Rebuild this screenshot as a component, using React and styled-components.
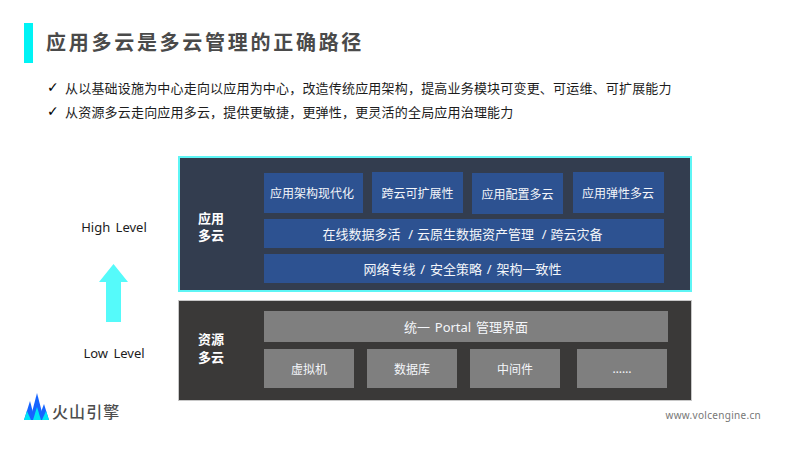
import React from 'react';
import styled, { createGlobalStyle } from 'styled-components';

const GlobalStyle = createGlobalStyle`
  html, body {
    margin: 0;
    padding: 0;
    background: #fff;
  }
  * {
    box-sizing: border-box;
  }
`;

const Slide = styled.div`
  width: 800px;
  height: 450px;
  overflow: hidden;
  background: #fff;
  padding-top: 23px;
  font-family: 'Noto Sans', 'Noto Sans CJK SC', sans-serif;
`;

const Header = styled.header`
  display: flex;
  align-items: center;
  height: 40px;
  margin-left: 24px;
`;

const AccentBar = styled.div`
  width: 9px;
  height: 40px;
  background: #00f3f5;
`;

const Title = styled.h1`
  margin: 0 0 0 13px;
  font-size: 20px;
  line-height: 40px;
  font-weight: 700;
  letter-spacing: 2.72px;
  color: #4a4a4a;
  white-space: nowrap;
`;

const Bullets = styled.ul`
  list-style: none;
  margin: 12px 0 0 47px;
  padding: 0;
`;

const Bullet = styled.li`
  display: flex;
  align-items: center;
  height: 24px;
  font-size: 13px;
  letter-spacing: 0.19px;
  color: #1c1c1c;
  white-space: nowrap;
`;

const Check = styled.span`
  width: 18px;
  font-family: 'DejaVu Sans', sans-serif;
  font-size: 14px;
  font-weight: 700;
  color: #000;
`;

const Diagram = styled.section`
  display: flex;
  margin: 33px 0 0 78px;
`;

const LevelColumn = styled.div`
  width: 100px;
  height: 245px;
  display: flex;
  flex-direction: column;
  align-items: center;
  padding: 61px 0 0;
`;

const LevelLabel = styled.div`
  height: 20px;
  line-height: 20px;
  font-size: 13px;
  word-spacing: 2px;
  color: #1c1c1c;
  white-space: nowrap;
  margin-right: 28px;
`;

const ArrowIcon = styled.svg`
  display: block;
  margin: 27px 29px 21px 0;
`;

const Stack = styled.div`
  display: flex;
  flex-direction: column;
  gap: 8px;
`;

const Panel = styled.div`
  width: 514px;
  height: ${(p) => p.$height}px;
  display: flex;
  background: ${(p) => p.$bg};
  border: ${(p) => p.$border};
  padding-top: ${(p) => p.$top}px;
`;

const PanelLabel = styled.div`
  width: ${(p) => p.$width}px;
  flex: none;
  align-self: center;
  padding-left: ${(p) => p.$indent}px;
  padding-bottom: ${(p) => p.$lift}px;
  font-size: 13px;
  line-height: ${(p) => p.$leading}px;
  font-weight: 700;
  color: #fff;
`;

const Rows = styled.div`
  display: flex;
  flex-direction: column;
`;

const TileRow = styled.div`
  display: flex;
  align-items: flex-start;
  height: 41px;
`;

const Block = styled.div`
  display: flex;
  align-items: center;
  justify-content: center;
  flex: none;
  width: ${(p) => p.$width}px;
  height: ${(p) => p.$height}px;
  margin-top: ${(p) => p.$top || 0}px;
  margin-left: ${(p) => p.$left || 0}px;
  padding-right: ${(p) => p.$nudge || 0}px;
  background: ${(p) => p.$bg};
  color: #f4f6fa;
  font-size: ${(p) => p.$size || 12}px;
  word-spacing: ${(p) => p.$wordGap || 0}px;
  white-space: pre;
`;

const BLUE = '#2d5291';
const GREY = '#7f7f7f';

const Footer = styled.footer`
  display: flex;
  align-items: center;
  justify-content: space-between;
  height: 30px;
  margin-top: -10px;
  padding: 0 39px 0 24px;
`;

const Brand = styled.div`
  display: flex;
  align-items: center;
  gap: 3px;
`;

const BrandName = styled.span`
  font-size: 16px;
  font-weight: 500;
  letter-spacing: 1.1px;
  color: #4d4d4d;
  padding-top: 9px;
`;

const Site = styled.span`
  font-size: 10px;
  letter-spacing: 0.3px;
  color: #777;
  padding-top: 18px;
`;

const Arrow = () => (
  <ArrowIcon width="29" height="58" viewBox="0 0 29 58">
    <path d="M14.5 0 L29 18 H22 V58 H7 V18 H0 Z" fill="#55fafa" />
  </ArrowIcon>
);

const Logo = () => (
  <svg width="25" height="28" viewBox="0 0 25 28">
    <path d="M0 28 L6 9 L11 28 Z" fill="#1664ff" />
    <path d="M14 28 L20 12 L25 28 Z" fill="#1664ff" />
    <path d="M6 28 L13 1 L20 28 Z" fill="#1664ff" />
    <path d="M0 28 L3 19 L7 28 Z" fill="#00e5f5" />
    <path d="M18 28 L22 19 L25 28 Z" fill="#00e5f5" />
    <path d="M9 28 L13 15 L17 28 Z" fill="#00e5f5" />
  </svg>
);

const bullets = [
  '从以基础设施为中心走向以应用为中心，改造传统应用架构，提高业务模块可变更、可运维、可扩展能力',
  '从资源多云走向应用多云，提供更敏捷，更弹性，更灵活的全局应用治理能力',
];

export default function App() {
  return (
    <Slide>
      <GlobalStyle />
      <Header>
        <AccentBar />
        <Title>应用多云是多云管理的正确路径</Title>
      </Header>
      <Bullets>
        {bullets.map((text) => (
          <Bullet key={text}>
            <Check>✓</Check>
            {text}
          </Bullet>
        ))}
      </Bullets>
      <Diagram>
        <LevelColumn>
          <LevelLabel>High Level</LevelLabel>
          <Arrow />
          <LevelLabel>Low Level</LevelLabel>
        </LevelColumn>
        <Stack>
          <Panel $height={136} $bg="#333d4f" $border="2px solid #5ef5f5" $top={14}>
            <PanelLabel $width={84} $indent={18} $lift={8} $leading={17}>
              应用
              <br />
              多云
            </PanelLabel>
            <Rows>
              <TileRow>
                <Block $bg={BLUE} $width={99} $height={40} $top={1} $nudge={3}>应用架构现代化</Block>
                <Block $bg={BLUE} $width={91} $height={41} $left={9}>跨云可扩展性</Block>
                <Block $bg={BLUE} $width={91} $height={41} $left={9} $top={1}>应用配置多云</Block>
                <Block $bg={BLUE} $width={91} $height={41} $left={10} $nudge={1}>应用弹性多云</Block>
              </TileRow>
              <Block $bg={BLUE} $width={400} $height={29} $top={6} $size={13} $wordGap={0.5} $nudge={3}>在线数据多活  / 云原生数据资产管理  / 跨云灾备</Block>
              <Block $bg={BLUE} $width={400} $height={29} $top={6} $size={13} $wordGap={1.5} $nudge={3}>网络专线 / 安全策略 / 架构一致性</Block>
            </Rows>
          </Panel>
          <Panel $height={101} $bg="#3a3938" $border="1px solid #c8c8c8" $top={10}>
            <PanelLabel $width={85} $indent={19} $lift={16} $leading={18}>
              资源
              <br />
              多云
            </PanelLabel>
            <Rows>
              <Block $bg={GREY} $width={404} $height={31} $size={13} $wordGap={1.5}>统一 Portal 管理界面</Block>
              <TileRow>
                <Block $bg={GREY} $width={90} $height={39} $top={7}>虚拟机</Block>
                <Block $bg={GREY} $width={90} $height={39} $top={7} $left={13}>数据库</Block>
                <Block $bg={GREY} $width={90} $height={39} $top={7} $left={13}>中间件</Block>
                <Block $bg={GREY} $width={90} $height={39} $top={7} $left={17}>……</Block>
              </TileRow>
            </Rows>
          </Panel>
        </Stack>
      </Diagram>
      <Footer>
        <Brand>
          <Logo />
          <BrandName>火山引擎</BrandName>
        </Brand>
        <Site>www.volcengine.cn</Site>
      </Footer>
    </Slide>
  );
}
